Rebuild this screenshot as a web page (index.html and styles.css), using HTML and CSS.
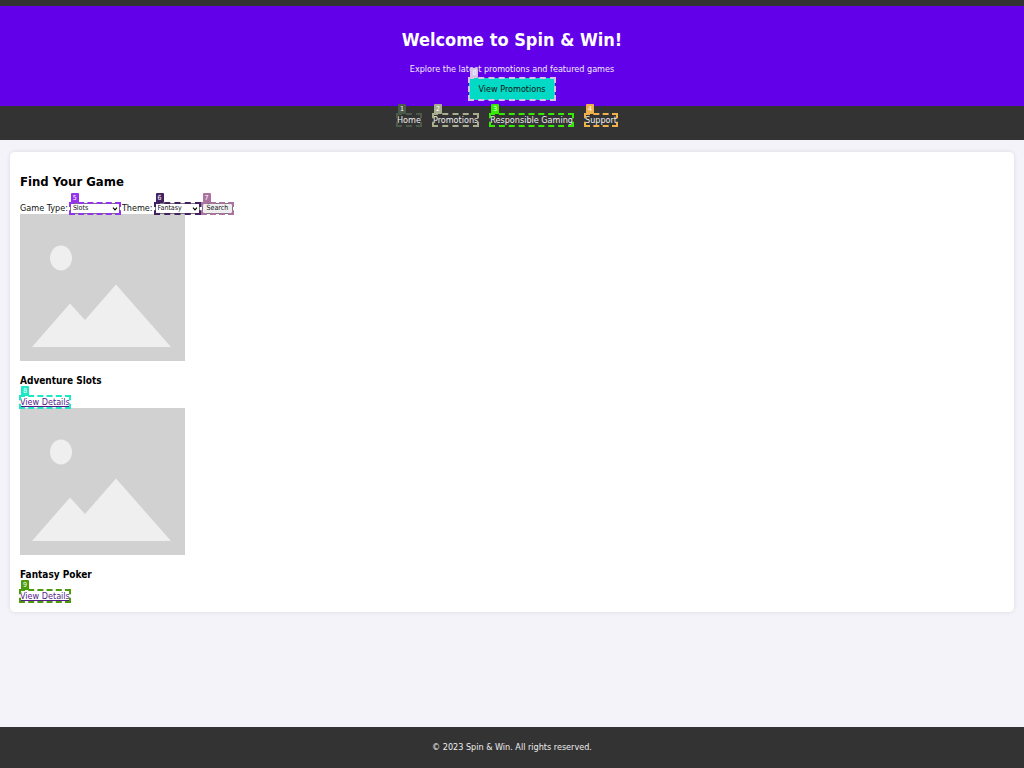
FILE: index.html
```
<!DOCTYPE html>
<html lang="en">
<head>
<meta charset="utf-8">
<title>Spin &amp; Win</title>
<link rel="stylesheet" href="styles.css">
</head>
<body>
<header class="hero">
  <h1>Welcome to Spin &amp; Win!</h1>
  <p>Explore the latest promotions and featured games</p>
  <span class="mark m0"><span class="tag">0</span><button class="cta" type="button">View Promotions</button></span>
</header>
<nav class="nav">
  <span class="mark m1"><span class="tag">1</span><a href="#">Home</a></span>
  <span class="mark m2"><span class="tag">2</span><a href="#">Promotions</a></span>
  <span class="mark m3"><span class="tag">3</span><a href="#">Responsible Gaming</a></span>
  <span class="mark m4"><span class="tag">4</span><a href="#">Support</a></span>
</nav>
<main class="card">
  <h2>Find Your Game</h2>
  <form class="search">
    <label for="type">Game Type:</label>
    <span class="mark m5"><span class="tag">5</span><select id="type" class="type"><option>Slots</option><option>Poker</option></select><svg class="arrow" viewBox="0 0 6 4"><path d="M1 .7 3 2.800 5 .7"/></svg></span>
    <label for="theme">Theme:</label>
    <span class="mark m6"><span class="tag">6</span><select id="theme" class="theme"><option>Fantasy</option><option>Adventure</option></select><svg class="arrow" viewBox="0 0 6 4"><path d="M1 .7 3 2.800 5 .7"/></svg></span>
    <span class="mark m7"><span class="tag">7</span><button class="go" type="button">Search</button></span>
  </form>
  <article class="game">
    <svg class="thumb" viewBox="0 0 165 147" role="img" aria-label="Adventure Slots"><path fill="#d1d1d1" d="M0 0h165v147H0z"/><ellipse cx="41" cy="44" rx="11" ry="12.5" fill="#efefef"/><path fill="#efefef" d="M12 133 50 89.500 65 106 96 70.500 151 133z"/></svg>
    <h3>Adventure Slots</h3>
    <span class="mark m8"><span class="tag">8</span><a href="#">View Details</a></span>
  </article>
  <article class="game">
    <svg class="thumb" viewBox="0 0 165 147" role="img" aria-label="Fantasy Poker"><path fill="#d1d1d1" d="M0 0h165v147H0z"/><ellipse cx="41" cy="44" rx="11" ry="12.5" fill="#efefef"/><path fill="#efefef" d="M12 133 50 89.500 65 106 96 70.500 151 133z"/></svg>
    <h3>Fantasy Poker</h3>
    <span class="mark m9"><span class="tag">9</span><a href="#">View Details</a></span>
  </article>
</main>
<footer class="footer">© 2023 Spin &amp; Win. All rights reserved.</footer>
</body>
</html>
```
FILE: styles.css
```
* { box-sizing: border-box; }
body {
  margin: 0;
  min-height: 100vh;
  display: flex;
  flex-direction: column;
  background: #f4f3f9;
  color: #111;
  font: 9px/12px "DejaVu Sans Condensed", "DejaVu Sans", sans-serif;
}
h1, h2, h3, p { margin: 0; color: inherit; }
.hero {
  display: flex;
  flex-direction: column;
  align-items: center;
  padding: 22px 10px 6px;
  border-top: 6px solid #333;
  background: #6200ea;
  color: #fff;
}
.hero h1 { font-size: 18px; line-height: 24px; }
.hero p { margin: 11px 0 3px; color: #f3ecfd; }
.mark { position: relative; display: inline-flex; }
.mark::after {
  content: "";
  position: absolute;
  inset: -1px;
  border: 1px dashed var(--c);
  pointer-events: none;
}
.tag {
  position: absolute;
  left: 1px;
  top: -10px;
  z-index: 1;
  width: 8px;
  height: 10px;
  border-radius: 1px;
  background: var(--c);
  color: #fff;
  font-size: 7px;
  line-height: 10px;
  text-align: center;
}
.m0 { --c: #d5c3e8; }
.m1 { --c: #4b5a4b; }
.m2 { --c: #a9ad90; }
.m3 { --c: #35ec00; }
.m4 { --c: #f0b04c; }
.m5 { --c: #9333ea; }
.m6 { --c: #43205f; }
.m7 { --c: #ad73a0; }
.m8 { --c: #1ce8c4; }
.m9 { --c: #4c9a0a; }
.mark::after { border-width: 2px; }
.cta {
  height: 22px;
  padding: 0 9px;
  border: 0;
  border-radius: 3px;
  background: #03dac5;
  color: #111;
  font: inherit;
}
.nav {
  display: flex;
  justify-content: center;
  gap: 12px;
  padding: 8px 20px 14px 10px;
  background: #333;
}
.nav a { color: #eee; text-decoration: none; }
.card {
  margin: 12px 10px;
  padding: 20px 10px 10px;
  border-radius: 5px;
  background: #fff;
  box-shadow: 0 0 5px #0000001a;
}
.card h2 { font-size: 13px; line-height: 20px; color: #000; }
.search { display: flex; align-items: center; gap: 2px; margin-top: 10px; }
.search select, .go {
  height: 11px;
  padding: 0 2px;
  border: 1px solid #777;
  border-radius: 0;
  appearance: none;
  background: #fff;
  color: #111;
  font: 7px/9px "DejaVu Sans Condensed", "DejaVu Sans", sans-serif;
}
.search .type { width: 50px; }
.search .theme { width: 45px; }
.search .go { padding: 0 4px; background: #efefef; border-radius: 2px; }
.arrow {
  position: absolute;
  right: 2px;
  top: 4px;
  width: 6px;
  height: 4px;
  fill: none;
  stroke: #000;
  stroke-width: 1.2;
  pointer-events: none;
}
.game { display: flex; flex-direction: column; align-items: flex-start; }
.thumb { display: block; width: 165px; height: 147px; }
.game h3 { margin: 12px 0 8px; font-size: 10px; line-height: 15px; color: #000; }
.game a { color: #551a8b; }
.footer {
  margin-top: auto;
  padding: 14px 10px 15px;
  background: #333;
  color: #eee;
  text-align: center;
}
```
